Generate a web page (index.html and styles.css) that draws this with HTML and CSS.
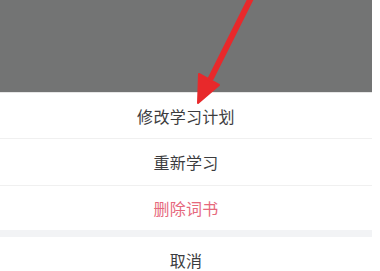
FILE: index.html
```html
<!DOCTYPE html>
<html lang="zh-CN">
<head>
<meta charset="utf-8">
<link rel="stylesheet" href="styles.css">
</head>
<body>
<div class="screen">
  <div class="mask"></div>
  <div class="sheet">
    <div class="item item-first">修改学习计划</div>
    <div class="item item-second">重新学习</div>
    <div class="item item-danger">删除词书</div>
    <div class="gap"></div>
    <div class="item item-cancel">取消</div>
  </div>
  <svg class="arrow" width="380" height="271" viewBox="0 0 380 271">
    <line x1="253" y1="-6" x2="211" y2="78" stroke="#e8292b" stroke-width="6" stroke-linecap="round"/>
    <polygon points="198,103 219,85 199,74" fill="#e8292b" stroke="#e8292b" stroke-width="2" stroke-linejoin="round"/>
  </svg>
</div>
</body>
</html>
```
FILE: styles.css
```css
html, body {
  margin: 0;
  padding: 0;
  background: #ffffff;
}
.screen {
  position: relative;
  width: 380px;
  height: 271px;
  overflow: hidden;
  font-family: "Noto Sans CJK SC", "Noto Sans", sans-serif;
}
.mask {
  width: 372px;
  height: 92px;
  background: #737474;
}
.sheet {
  width: 372px;
  background: #ffffff;
  border-top: 1px solid #e6e6e6;
}
.item {
  display: flex;
  align-items: center;
  justify-content: center;
  font-size: 16px;
  color: #3c3c3e;
  letter-spacing: 0.3px;
}
.item-first {
  height: 45px;
  border-bottom: 1px solid #f0f0f0;
}
.item-second {
  height: 46px;
  border-bottom: 1px solid #f0f0f0;
}
.item-danger {
  height: 44px;
  color: #e6687c;
}
.gap {
  height: 7px;
  background: #f2f3f5;
}
.item-cancel {
  height: 46px;
}
.arrow {
  position: absolute;
  left: 0;
  top: 0;
}
```
